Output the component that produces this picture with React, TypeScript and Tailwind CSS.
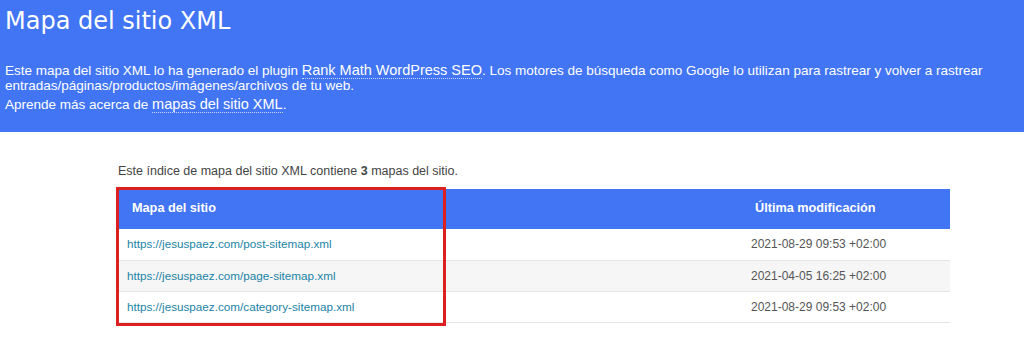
const sitemaps = [
  { url: "https://jesuspaez.com/post-sitemap.xml", date: "2021-08-29 09:53 +02:00" },
  { url: "https://jesuspaez.com/page-sitemap.xml", date: "2021-04-05 16:25 +02:00" },
  { url: "https://jesuspaez.com/category-sitemap.xml", date: "2021-08-29 09:53 +02:00" },
];

export default function App() {
  return (
    <div className="relative h-[358px] w-[1024px] overflow-hidden bg-white font-['Liberation_Sans',Arial,sans-serif]">
      <header className="h-[132px] bg-[#4275f4] px-[5px] pt-[5px] text-white">
        <h1 className="font-['DejaVu_Sans',Verdana,sans-serif] text-[24px] leading-[32px]">
          Mapa del sitio XML
        </h1>

        <p className="mt-[26px] text-[13.5px] leading-[15px]">
          Este mapa del sitio XML lo ha generado el plugin{" "}
          <a className="border-b border-dotted border-white/70 text-[14.5px]">
            Rank Math WordPress SEO
          </a>
          . Los motores de búsqueda como Google lo utilizan para rastrear y volver a rastrear
          <br />
          entradas/páginas/productos/imágenes/archivos de tu web.
        </p>

        <p className="mt-[2px] text-[13.5px] leading-[18px]">
          Aprende más acerca de{" "}
          <a className="border-b border-dotted border-white/70 text-[14.5px]">
            mapas del sitio XML
          </a>
          .
        </p>
      </header>

      <div className="ml-[118px] w-[832px]">
        <p className="mt-[32px] text-[12.5px] leading-[14px] text-[#444]">
          Este índice de mapa del sitio XML contiene <strong>3</strong> mapas del sitio.
        </p>

        <table className="mt-[11px] w-full border-collapse text-left">
          <thead>
            <tr className="h-[40px] bg-[#4275f4] text-[12.7px] font-bold text-white">
              <th className="pl-[14px]">Mapa del sitio</th>
              <th className="w-[209px] pl-[14px]">Última modificación</th>
            </tr>
          </thead>
          <tbody>
            {sitemaps.map((item, index) => (
              <tr
                key={item.url}
                className={`h-[31px] border-b border-[#e4e4e4] ${
                  index === 1 ? "bg-[#f6f6f6]" : "bg-white"
                }`}
              >
                <td className="pl-[9px] text-[11.7px]">
                  <a className="text-[#1a84a6]">{item.url}</a>
                </td>
                <td className="pl-[10px] text-[12px] text-[#555]">{item.date}</td>
              </tr>
            ))}
          </tbody>
        </table>
      </div>

      <div className="absolute left-[116px] top-[187px] h-[139px] w-[330px] border-[3px] border-[#dc1f1f]" />
    </div>
  );
}
